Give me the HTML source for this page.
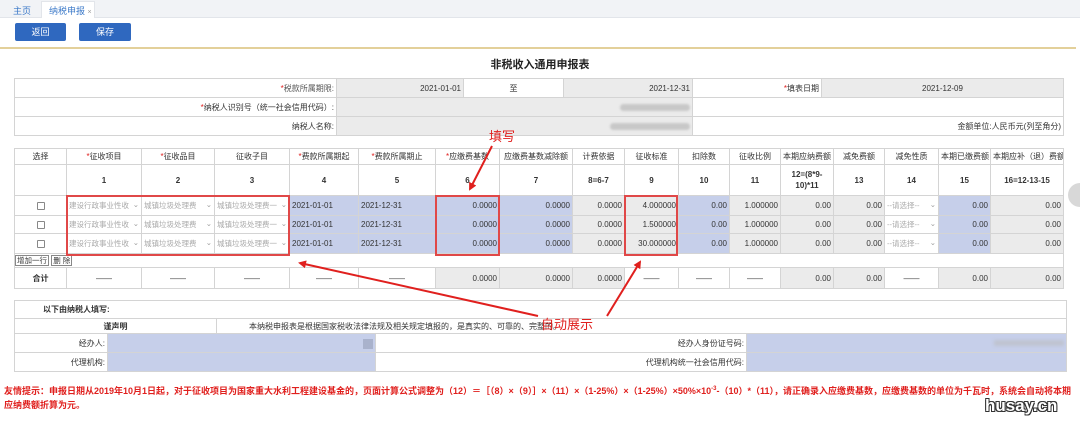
<!DOCTYPE html>
<html><head><meta charset="utf-8">
<style>
*{margin:0;padding:0;box-sizing:border-box}
body{width:1080px;height:422px;overflow:hidden;background:#fff;font-family:"Liberation Sans","Noto Sans CJK SC",sans-serif;font-size:8px;color:#333;position:relative}
.a{position:absolute}
.tabbar{left:0;top:0;width:1080px;height:18px;background:#f1f3f6;border-bottom:1px solid #e2e5ea}
.btn{top:23px;height:18px;width:51px;background:#2f68bf;border-radius:2px;color:#fff;font-size:9px;text-align:center;line-height:18px}
table{border-collapse:collapse;table-layout:fixed;position:absolute}
td{border:1px solid #d4d4d4;overflow:hidden;white-space:nowrap;padding:0 2px;font-size:8px}
.g{background:#ebebeb}.b{background:#c6cfea}
.r{text-align:right}.c{text-align:center}.l{text-align:left}
.sel{color:#aaa;font-size:7.5px}
.sel span{float:right;color:#999}
.cb{display:inline-block;width:8px;height:8px;border:1px solid #888;border-radius:1px;vertical-align:middle;background:#fff}
.rb{position:absolute;border:2px solid #e04848}
.red{color:#e0201e}
</style></head><body>
<div class="a tabbar"></div>
<div class="a" style="left:13px;top:4px;font-size:9px;color:#3a78c8">主页</div>
<div class="a" style="left:41px;top:1px;width:54px;height:17px;background:#fff;border:1px solid #e2e5ea;border-bottom:none"></div>
<div class="a" style="left:49px;top:4px;font-size:9px;color:#3a78c8">纳税申报 <span style="color:#999;font-size:7px">×</span></div>
<div class="a btn" style="left:15px">返回</div>
<div class="a btn" style="left:79px;width:52px">保存</div>
<div class="a" style="left:0;top:47px;width:1076px;height:2px;background:#e3d09a"></div>
<div class="a" style="left:0;top:56px;width:1080px;text-align:center;font-size:11px;font-weight:bold;color:#222">非税收入通用申报表</div>

<table style="left:14px;top:78px;width:1049px">
<colgroup><col style="width:322px"><col style="width:127px"><col style="width:100px"><col style="width:129px"><col style="width:129px"><col style="width:242px"></colgroup>
<tr style="height:19px"><td class="r" style="color:#555"><span class="red">*</span>税款所属期限:</td><td class="g r">2021-01-01</td><td class="c">至</td><td class="g r">2021-12-31</td><td class="r"><span class="red">*</span>填表日期</td><td class="g c">2021-12-09</td></tr>
<tr style="height:19px"><td class="r"><span class="red">*</span>纳税人识别号（统一社会信用代码）:</td><td class="g" colspan="3"><div style="float:right;width:70px;height:7px;background:#c8c8c8;border-radius:4px;filter:blur(1px)"></div></td><td colspan="2"></td></tr>
<tr style="height:19px"><td class="r">纳税人名称:</td><td class="g" colspan="3"><div style="float:right;width:80px;height:7px;background:#c8c8c8;border-radius:4px;filter:blur(1px)"></div></td><td colspan="2" class="r">金额单位:人民币元(列至角分)</td></tr>
</table>

<table style="left:14px;top:148px;width:1049px">
<colgroup><col style="width:52px"><col style="width:75px"><col style="width:73px"><col style="width:75px"><col style="width:69px"><col style="width:77px"><col style="width:64px"><col style="width:73px"><col style="width:52px"><col style="width:54px"><col style="width:51px"><col style="width:51px"><col style="width:53px"><col style="width:51px"><col style="width:54px"><col style="width:52px"><col style="width:73px"></colgroup>
<tr style="height:16px" class="c"><td class="c">选择</td><td class="c"><span class="red">*</span>征收项目</td><td class="c"><span class="red">*</span>征收品目</td><td class="c">征收子目</td><td class="c"><span class="red">*</span>费款所属期起</td><td class="c"><span class="red">*</span>费款所属期止</td><td class="c"><span class="red">*</span>应缴费基数</td><td class="c">应缴费基数减除额</td><td class="c">计费依据</td><td class="c">征收标准</td><td class="c">扣除数</td><td class="c">征收比例</td><td class="c">本期应纳费额</td><td class="c">减免费额</td><td class="c">减免性质</td><td class="c">本期已缴费额</td><td class="c">本期应补（退）费额</td></tr>
<tr style="height:31px;font-weight:bold"><td></td><td class="c">1</td><td class="c">2</td><td class="c">3</td><td class="c">4</td><td class="c">5</td><td class="c">6</td><td class="c">7</td><td class="c">8=6-7</td><td class="c">9</td><td class="c">10</td><td class="c">11</td><td class="c" style="white-space:normal;line-height:11px">12=(8*9-10)*11</td><td class="c">13</td><td class="c">14</td><td class="c">15</td><td class="c">16=12-13-15</td></tr>
<tr style="height:20px"><td class="c"><span class="cb"></span></td><td class="sel">建设行政事业性收<span>⌄</span></td><td class="sel">城镇垃圾处理费<span>⌄</span></td><td class="sel">城镇垃圾处理费一<span>⌄</span></td><td class="b">2021-01-01</td><td class="b">2021-12-31</td><td class="b r">0.0000</td><td class="b r">0.0000</td><td class="g r">0.0000</td><td class="g r">4.000000</td><td class="b r">0.00</td><td class="g r">1.000000</td><td class="g r">0.00</td><td class="g r">0.00</td><td class="sel">--请选择--<span>⌄</span></td><td class="b r">0.00</td><td class="g r">0.00</td></tr>
<tr style="height:18px"><td class="c"><span class="cb"></span></td><td class="sel">建设行政事业性收<span>⌄</span></td><td class="sel">城镇垃圾处理费<span>⌄</span></td><td class="sel">城镇垃圾处理费一<span>⌄</span></td><td class="b">2021-01-01</td><td class="b">2021-12-31</td><td class="b r">0.0000</td><td class="b r">0.0000</td><td class="g r">0.0000</td><td class="g r">1.500000</td><td class="b r">0.00</td><td class="g r">1.000000</td><td class="g r">0.00</td><td class="g r">0.00</td><td class="sel">--请选择--<span>⌄</span></td><td class="b r">0.00</td><td class="g r">0.00</td></tr>
<tr style="height:20px"><td class="c"><span class="cb"></span></td><td class="sel">建设行政事业性收<span>⌄</span></td><td class="sel">城镇垃圾处理费<span>⌄</span></td><td class="sel">城镇垃圾处理费一<span>⌄</span></td><td class="b">2021-01-01</td><td class="b">2021-12-31</td><td class="b r">0.0000</td><td class="b r">0.0000</td><td class="g r">0.0000</td><td class="g r">30.000000</td><td class="b r">0.00</td><td class="g r">1.000000</td><td class="g r">0.00</td><td class="g r">0.00</td><td class="sel">--请选择--<span>⌄</span></td><td class="b r">0.00</td><td class="g r">0.00</td></tr>
<tr style="height:14px"><td colspan="17" style="padding:0"><span style="border:1px solid #888;padding:0 1px;font-size:7.5px">增加一行</span> <span style="border:1px solid #888;padding:0 1px;font-size:7.5px">删 除</span></td></tr>
<tr style="height:21px"><td class="c" style="font-weight:bold">合计</td><td class="c">——</td><td class="c">——</td><td class="c">——</td><td class="c">——</td><td class="c">——</td><td class="g r">0.0000</td><td class="g r">0.0000</td><td class="g r">0.0000</td><td class="c">——</td><td class="c">——</td><td class="c">——</td><td class="g r">0.00</td><td class="g r">0.00</td><td class="c">——</td><td class="g r">0.00</td><td class="g r">0.00</td></tr>
</table>

<table style="left:14px;top:300px;width:1052px">
<colgroup><col style="width:93px"><col style="width:109px"><col style="width:159px"><col style="width:371px"><col style="width:320px"></colgroup>
<tr style="height:18px"><td colspan="5" style="font-weight:bold;padding-left:28px">以下由纳税人填写:</td></tr>
<tr style="height:15px"><td colspan="2" class="c" style="font-weight:bold">谨声明</td><td colspan="3" style="padding-left:32px">本纳税申报表是根据国家税收法律法规及相关规定填报的，是真实的、可靠的、完整的。</td></tr>
<tr style="height:19px"><td class="r">经办人:</td><td class="b" colspan="2"><div style="float:right;width:10px;height:10px;background:#a9b2cc;margin-top:2px"></div></td><td class="r">经办人身份证号码:</td><td class="b"><div style="float:right;width:70px;height:6px;background:#bfc3d0;filter:blur(1.5px)"></div></td></tr>
<tr style="height:19px"><td class="r">代理机构:</td><td class="b" colspan="2"></td><td class="r">代理机构统一社会信用代码:</td><td class="b"></td></tr>
</table>

<div class="a red" style="left:4px;top:382px;width:1074px;font-size:9px;font-weight:bold;line-height:14px">友情提示：申报日期从2019年10月1日起，对于征收项目为国家重大水利工程建设基金的，页面计算公式调整为（12）＝［（8）×（9）］×（11）×（1-25%）×（1-25%）×50%×10<sup style="font-size:6px">-3</sup>-（10）*（11），请正确录入应缴费基数，应缴费基数的单位为千瓦时，系统会自动将本期应纳费额折算为元。</div>

<div class="a" style="left:985px;top:396px;font-size:17px;font-weight:bold;color:#fff;font-family:'Liberation Sans',sans-serif;text-shadow:-1px -1px 0 #333,1px -1px 0 #333,-1px 1px 0 #333,1px 1px 0 #333">husay.cn</div>
<div class="a" style="left:1068px;top:183px;width:24px;height:24px;border-radius:12px;background:#d8d8d8"></div>

<div class="rb" style="left:66px;top:195px;width:224px;height:61px"></div>
<div class="rb" style="left:435px;top:195px;width:65px;height:61px"></div>
<div class="rb" style="left:624px;top:195px;width:54px;height:61px"></div>
<div class="a red" style="left:489px;top:126px;font-size:13px">填写</div>
<div class="a red" style="left:541px;top:314px;font-size:13px">自动展示</div>
<svg class="a" style="left:0;top:0" width="1080" height="422">
<defs><marker id="m" markerWidth="8" markerHeight="8" refX="6" refY="4" orient="auto" markerUnits="userSpaceOnUse"><path d="M0,0 L8,4 L0,8 z" fill="#e0201e"/></marker></defs>
<line x1="492" y1="146" x2="470" y2="189" stroke="#e0201e" stroke-width="2" marker-end="url(#m)"/>
<line x1="538" y1="316" x2="300" y2="263" stroke="#e0201e" stroke-width="2" marker-end="url(#m)"/>
<line x1="607" y1="316" x2="640" y2="262" stroke="#e0201e" stroke-width="2" marker-end="url(#m)"/>
</svg>
</body></html>
